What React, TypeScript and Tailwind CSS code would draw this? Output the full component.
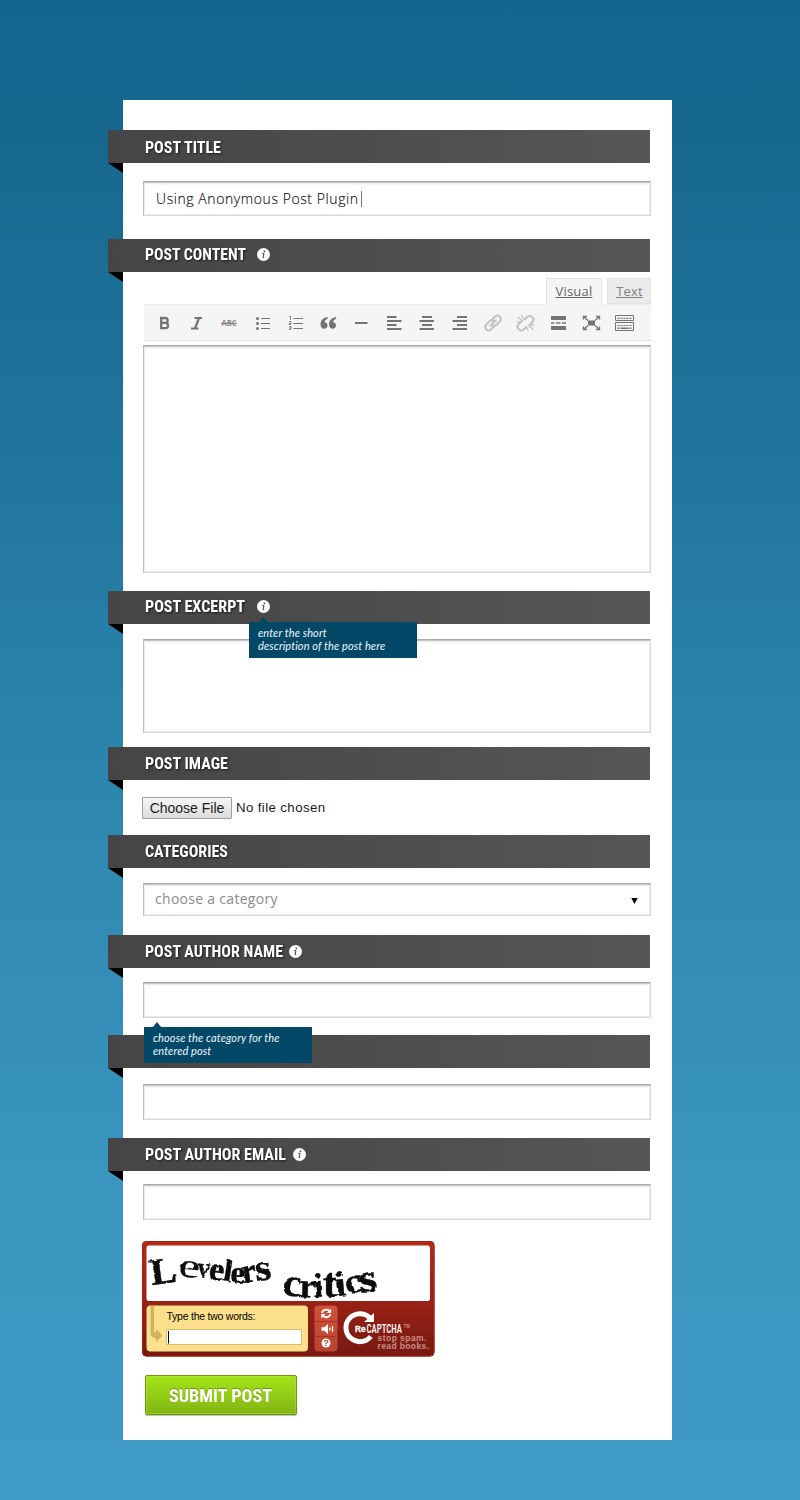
import type { ReactNode } from "react";

const FIELD =
  "ml-5 w-[508px] bg-white border border-[#d8d8d8] border-t-[#a9a9a9] border-l-[#bcbcbc] shadow-[inset_0_1px_0_#c6c6c6,inset_0_2px_0_#ececec,inset_0_3px_0_#f8f8f8,inset_-1px_-1px_0_#ececec,inset_1px_0_0_#ececec]";

const CONDENSED = "font-['Roboto_Condensed','Roboto',sans-serif] font-bold [font-stretch:75%]";

function InfoIcon() {
  return (
    <svg width="13" height="13" viewBox="0 0 13 13" className="block">
      <circle cx="6.5" cy="6.5" r="6.5" fill="#fff" />
      <circle cx="7.4" cy="3.4" r="0.85" fill="#444" />
      <path d="M5.400 5.500h1.600L6 9.500h1.100" fill="none" stroke="#444" strokeWidth="1" />
    </svg>
  );
}

function Tooltip({ children, arrow }: { children: ReactNode; arrow: string }) {
  return (
    <div className="relative h-9 w-[168px] bg-[#034867] pt-1 pl-[9px] font-['Lato',sans-serif] text-[11px] leading-[13px] tracking-[0.1px] text-[#eef6fa] italic">
      <svg width="8" height="5" viewBox="0 0 8 5" className={arrow}>
        <path d="M0 5 4 0l4 5z" fill="#034867" />
      </svg>
      {children}
    </div>
  );
}

type SectionProps = {
  title?: string;
  width?: number;
  lift?: string;
  infoGap?: string;
  height: string;
  children: ReactNode;
};

function Section({ title, width, lift = "mb-[2px]", infoGap, height, children }: SectionProps) {
  return (
    <section className={`${height} flex flex-col`}>
      <div className="relative -ml-[15px] flex h-[33px] w-[542px] shrink-0 items-center bg-linear-to-r from-[#454545] to-[#565656] pl-[37px]">
        <svg width="15" height="10" viewBox="0 0 15 10" className="absolute top-full left-0">
          <path d="M0 0h15v10z" fill="#000" />
        </svg>
        {title && (
          <svg width={width} height="20" className={`${lift} block overflow-visible [filter:drop-shadow(1px_1px_1px_#1a1a1a)]`}>
            <text x="0" y="16" fill="#fff" fontSize="16" textLength={width} lengthAdjust="spacingAndGlyphs" className={CONDENSED}>
              {title}
            </text>
          </svg>
        )}
        {infoGap && (
          <div className={infoGap}>
            <InfoIcon />
          </div>
        )}
      </div>
      {children}
    </section>
  );
}

function Toolbar() {
  const g = "#747474";
  return (
    <svg width="507" height="38" viewBox="144 304 507 38" className="block" fill="none" stroke={g}>
      <path d="M144 304h507v37H144z" fill="#f5f5f5" stroke="none" />
      <path d="M144 340.500h507" stroke="#dedede" />
      <path d="M144 304.500h402M602 304.500h49" stroke="#eee" />
      <path d="M161.200 317v12.200M160 318h5.200a2.300 2.300 0 0 1 0 4.900H161m4.400 0a2.600 2.600 0 0 1 0 5.300H160" strokeWidth="2.300" />
      <path d="M194.500 318h7.500M191 328.500h7.500M199 318l-4 10.500" strokeWidth="2.200" />
      <text x="221.500" y="326" fill="#8a8a8a" stroke="none" fontSize="8" textLength="15" lengthAdjust="spacingAndGlyphs" className="font-['Open_Sans',sans-serif] font-bold">ABC</text>
      <path d="M221 323.300h16" strokeWidth=".9" />
      <path d="M261 318.500h9M261 323.500h9M261 328.500h9" />
      <g fill={g} stroke="none">
        <circle cx="257.500" cy="318.500" r="1.500" />
        <circle cx="257.500" cy="323.500" r="1.500" />
        <circle cx="257.500" cy="328.500" r="1.500" />
      </g>
      <path d="M293.500 318.500h9.500M293.500 323.500h9.500M293.500 328.500h9.500" />
      <path d="M290.500 316v4M289 316.500h1.500M289 321.500h2v2h-2v1h2M289 326.500h2v3h-2M289 328h2" strokeWidth=".8" />
      <g fill={g} stroke="none">
        <path d="M327.500 317c-4.800.7-7 4-7 7.200 0 2.700 1.500 4.500 3.600 4.500 2 0 3.400-1.400 3.400-3.300 0-1.800-1.200-3-2.900-3.100.2-1.800 1.200-2.900 3.200-3.500z" />
        <path d="M336 317c-4.800.7-7 4-7 7.200 0 2.700 1.500 4.500 3.600 4.500 2 0 3.400-1.400 3.400-3.300 0-1.800-1.200-3-2.900-3.100.2-1.800 1.200-2.900 3.200-3.500z" />
      </g>
      <path d="M355 323h12.500" strokeWidth="2" />
      <path d="M387 317h9.500M387 321h14.500M387 325h9.500M387 329h14.500" strokeWidth="2" />
      <path d="M422 317h10M419.500 321H434M422 325h10M419.500 329H434" strokeWidth="2" />
      <path d="M457 317h10M452.500 321H467M457 325h10M452.500 329H467" strokeWidth="2" />
      <g stroke="#c2c2c2" strokeWidth="2" strokeLinecap="round">
        <path d="m490.300 325.700 5.400-5.400" />
        <path d="m491.800 319.700 3-3c3.500-3.200 8 1.300 4.900 4.800l-3.200 3.200c-1.200 1.200-3.200 1.300-4.400.2" />
        <path d="m494.200 326.300-3 3c-3.500 3.200-8-1.300-4.900-4.800l3.200-3.200c1.200-1.200 3.200-1.300 4.400-.2" />
        <path d="m524.500 319.300 2.300-2.100c3.800-3.200 8.800 1.200 5.600 5l-2.300 2.200M521.500 321.500l-2.800 2.500c-3.300 4 1.500 8.500 5.300 5.200l2.400-2.200" />
        <path d="m518 317.500 4.500 3.500M517.500 321.800h3M522 315.500l.8 3M528.500 325.500l4.500 4M526.500 327.500l1.500 3M530 325h3.500" strokeWidth="1.300" />
      </g>
      <path d="M551 318h15M551 328h15" strokeWidth="4" />
      <path d="M551 323h3.500M556 323h4.500M562 323h4" strokeWidth="1.600" />
      <path d="M588 320.500h7v5h-7z" fill={g} stroke="none" />
      <path d="m584 317 4 3.500M599 317l-4 3.500M584 329l4-3.500M599 329l-4-3.500" strokeWidth="1.200" />
      <path d="M583.500 319.500v-3h3.500M596 316.500h3.500v3M583.500 326.500v3h3.500M596 329.500h3.500v-3" strokeWidth="1.400" />
      <path d="M615.500 315.500h18v5h-18zM615.500 322.500h18v8h-18z" />
      <path d="M617.500 318.300h14M617.500 325.500h14" strokeDasharray="2 1" strokeWidth="1.200" />
      <path d="M617.500 328.300h2m1 0h8m1 0h2" strokeWidth="1.600" />
    </svg>
  );
}

type Glyph = { c: string; x: number; y: number; s: number; sx: number; r: number; thin?: boolean };

const WORDS: Glyph[] = [
  { c: "L", x: 152, y: 1285, s: 37, sx: 1.05, r: -8 },
  { c: "e", x: 178, y: 1276, s: 34, sx: 1.4, r: 6, thin: true },
  { c: "v", x: 197, y: 1277, s: 29, sx: 0.85, r: 4 },
  { c: "e", x: 208, y: 1279, s: 33, sx: 1.05, r: 7 },
  { c: "l", x: 222, y: 1281, s: 31, sx: 1.05, r: 9 },
  { c: "e", x: 230, y: 1283, s: 33, sx: 1, r: 3 },
  { c: "r", x: 243, y: 1283, s: 34, sx: 0.95, r: -8 },
  { c: "s", x: 256, y: 1281, s: 38, sx: 1.1, r: -6 },
  { c: "c", x: 282, y: 1295, s: 39, sx: 1.05, r: 5 },
  { c: "r", x: 299, y: 1297, s: 34, sx: 1.1, r: 2 },
  { c: "i", x: 314, y: 1297, s: 34, sx: 1, r: -3 },
  { c: "t", x: 323, y: 1297, s: 41, sx: 1, r: 0 },
  { c: "i", x: 336, y: 1296, s: 35, sx: 1.1, r: -5 },
  { c: "c", x: 346, y: 1293, s: 33, sx: 1.1, r: -6 },
  { c: "s", x: 360, y: 1293, s: 41, sx: 1.15, r: -7 },
];

function Captcha() {
  return (
    <svg width="293" height="116" viewBox="142 1241 293 116" className="block">
      <defs>
        <linearGradient id="red" x1="0" y1="0" x2="0" y2="1">
          <stop offset="0" stopColor="#b52b17" />
          <stop offset=".5" stopColor="#9a2215" />
          <stop offset="1" stopColor="#771912" />
        </linearGradient>
        <linearGradient id="keys" x1="0" y1="0" x2="0" y2="1">
          <stop offset="0" stopColor="#d1523b" />
          <stop offset="1" stopColor="#b8432f" />
        </linearGradient>
        <filter id="rough" x="-5%" y="-20%" width="110%" height="140%">
          <feTurbulence type="fractalNoise" baseFrequency=".14" numOctaves="2" seed="7" result="n" />
          <feDisplacementMap in="SourceGraphic" in2="n" scale="3" xChannelSelector="R" yChannelSelector="G" />
        </filter>
      </defs>
      <rect x="142" y="1241" width="292.500" height="115.500" rx="4.500" fill="url(#red)" />
      <rect x="142.500" y="1241.500" width="291.500" height="114.500" rx="4" fill="none" stroke="#a5200f" />
      <rect x="146.500" y="1245.500" width="283.500" height="55.500" rx="2.500" fill="#fff" />
      <g filter="url(#rough)" fill="#080808" stroke="#080808">
        {WORDS.map((w, i) => (
          <text
            key={i}
            transform={`translate(${w.x} ${w.y}) rotate(${w.r}) scale(${w.sx} 1)`}
            fontSize={w.s}
            strokeWidth={w.thin ? 0.2 : 0.4}
            className={w.thin ? "font-['Liberation_Serif',serif] font-normal" : "font-['Liberation_Serif',serif] font-bold"}
          >
            {w.c}
          </text>
        ))}
      </g>
      <rect x="146.500" y="1305.500" width="161.500" height="46" rx="4" fill="#fce08b" />
      <path d="M150.500 1306h3.500v25c0 1 .5 1.500 2 1.500v-3.500l6.500 6.500-6.500 6.500v-4c-4 0-5.500-2-5.500-6.500z" fill="#d0b55e" />
      <text x="166.500" y="1320" fontSize="10.500" textLength="89" className="font-['Liberation_Sans',sans-serif]">Type the two words:</text>
      <rect x="166.500" y="1329.500" width="135" height="15" fill="#fff" stroke="#d8be68" />
      <path d="M168.500 1331v12.500" stroke="#000" />
      <rect x="314.500" y="1305.500" width="23" height="46" rx="4" fill="url(#keys)" />
      <path d="M315 1321.500h22M315 1336.500h22" stroke="#a43423" />
      <g fill="none" stroke="#fff" strokeWidth="1.900">
        <path d="M322.200 1313c.3-3.200 4.500-4.400 7-2.300M330.300 1314c-.4 3.200-4.800 4.300-7.200 2.100" />
        <path d="M331.200 1308.500v4.500h-4.500zM321.300 1318.500v-4.500h4.500z" fill="#fff" stroke="none" />
        <path d="M321.500 1327.200h2.600l3.900-3.200v10l-3.900-3.200h-2.600z" fill="#fff" stroke="none" />
        <path d="M329.800 1327.500v3M332.500 1326v6" strokeWidth="1.300" />
      </g>
      <circle cx="326" cy="1343" r="4.500" fill="#fff" />
      <text x="326" y="1346.200" textAnchor="middle" fontSize="9" fill="#bc4632" className="font-['Liberation_Sans',sans-serif] font-bold">?</text>
      <path d="M369.800 1317.700a14 14 0 1 0 1 18.800" fill="none" stroke="#fff" strokeWidth="5" />
      <path d="M374 1313v9h-10z" fill="#fff" />
      <text x="355" y="1331.500" fontSize="8.500" fill="#fff" stroke="#fff" strokeWidth=".3" textLength="10.500" lengthAdjust="spacingAndGlyphs" className="font-['Liberation_Sans',sans-serif] font-bold">Re</text>
      <text x="366.500" y="1332.500" fontSize="12.500" fill="#fff" textLength="35.500" lengthAdjust="spacingAndGlyphs" className={`${CONDENSED} font-medium`}>CAPTCHA</text>
      <text x="403.500" y="1327.500" fontSize="4.500" fill="#e3b8b0" className="font-['Liberation_Sans',sans-serif]">TM</text>
      <g fill="#c88f86" fontSize="8.500" className="font-['Liberation_Sans',sans-serif] font-bold">
        <text x="377.500" y="1341" textLength="49">stop spam.</text>
        <text x="377.500" y="1349" textLength="51.500">read books.</text>
      </g>
    </svg>
  );
}

export default function App() {
  return (
    <div className="h-[1500px] w-[800px] overflow-hidden bg-[linear-gradient(#14658d_0px,#17688f_140px,#21769f_480px,#2f89b1_850px,#3b96c0_1200px,#3f9bc5_1500px)] pt-[100px]">
      <main className="ml-[123px] flex h-[1340px] w-[549px] flex-col bg-white pt-[30px]">
        <Section title="POST TITLE" width={76} lift="mb-0" height="h-[109px]">
          <div className={`${FIELD} mt-[18px] flex h-[35px] items-center pl-3`}>
            <svg width="203" height="20" className="block overflow-visible">
              <text x="0" y="15" fontSize="14" textLength="202" fill="#111" stroke="#111" strokeWidth=".15" className="font-['Open_Sans',sans-serif] font-light">Using Anonymous Post Plugin</text>
            </svg>
            <span className="ml-[2px] h-4 w-px bg-[#777]" />
          </div>
        </Section>

        <Section title="POST CONTENT" width={101} lift="mb-[3px]" infoGap="ml-[11px] mb-[2px]" height="h-[352px]">
          <div className="mt-[6px] ml-[21px] w-[507px]">
            <div className="flex h-[26px] justify-end gap-[5px] font-['Open_Sans','Noto_Sans',sans-serif] text-[13px] leading-[24px]">
              <span className="w-[56px] border border-b-0 border-[#e2e2e2] bg-[#f5f5f5] text-center tracking-[0.200px] text-[#666] underline">Visual</span>
              <span className="w-[44px] border border-r-0 border-[#e0e0e0] bg-[#ebebeb] text-center tracking-[0.200px] text-[#808080] underline">Text</span>
            </div>
            <Toolbar />
          </div>
          <div className={`${FIELD} mt-[3px] h-[228px]`} />
        </Section>

        <Section title="POST EXCERPT" width={100} lift="mb-[3px]" infoGap="ml-3 mb-[2px]" height="h-[156px]">
          <div className={`${FIELD} relative mt-[15px] h-[94px]`}>
            <div className="absolute -top-[18px] left-[105px]">
              <Tooltip arrow="absolute -top-[5px] left-[10px]">
                enter the short
                <br />
                description of the post here
              </Tooltip>
            </div>
          </div>
        </Section>

        <Section title="POST IMAGE" width={83} height="h-[88px]">
          <div className="mt-[17px] ml-[19px] flex h-[22px] items-center font-['Liberation_Sans',sans-serif] text-[14px] text-[#1c1c1c]">
            <button className="h-[22px] w-[90px] rounded-[1px] border border-[#a0a0a0] bg-linear-to-b from-[#f6f6f6] to-[#dcdcdc] text-center leading-[20px] whitespace-nowrap">Choose File</button>
            <span className="ml-1 text-[13.300px] tracking-[0.370px] whitespace-nowrap">No file chosen</span>
          </div>
        </Section>

        <Section title="CATEGORIES" width={83} height="h-[100px]">
          <div className={`${FIELD} flex h-[33px] mt-[15px] items-center justify-between pr-3 pl-[11px]`}>
            <svg width="123" height="20" className="mb-px block overflow-visible">
              <text x="0" y="15" fontSize="14" textLength="122.500" fill="#8a8a8a" className="font-['Open_Sans',sans-serif] font-normal">choose a category</text>
            </svg>
            <svg width="7" height="6" viewBox="0 0 7 6" className="mt-[2px] block">
              <path d="M.3 0h6.400L3.500 6z" fill="#000" />
            </svg>
          </div>
        </Section>

        <Section title="POST AUTHOR NAME" width={138} infoGap="ml-[6px]" height="h-[100px]">
          <div className={`${FIELD} relative z-10 mt-[14px] h-9`}>
            <div className="absolute top-[44px] left-0">
              <Tooltip arrow="absolute -top-[5px] left-[9px]">
                choose the category for the
                <br />
                entered post
              </Tooltip>
            </div>
          </div>
        </Section>

        <Section height="h-[103px]">
          <div className={`${FIELD} mt-4 h-9`} />
        </Section>

        <Section title="POST AUTHOR EMAIL" width={141} infoGap="ml-[7px]" height="h-[103px]">
          <div className={`${FIELD} mt-[13px] h-9`} />
        </Section>

        <div className="ml-[19px]">
          <Captcha />
        </div>

        <button className="mt-[18px] ml-[22px] flex h-10 w-[152px] items-center justify-center rounded-[2px] border border-[#699a0c] bg-linear-to-b from-[#a5e519] to-[#82b514] shadow-[inset_0_0_0_1px_#b9ec4c66,0_1px_1px_#bbb]">
          <svg width="103" height="24" className="mr-[2px] block overflow-visible [filter:drop-shadow(0_-1px_0_#6c980e)]">
            <text x="0" y="19" fill="#fff" fontSize="18" textLength="103" lengthAdjust="spacingAndGlyphs" className={CONDENSED}>SUBMIT POST</text>
          </svg>
        </button>
      </main>
    </div>
  );
}
